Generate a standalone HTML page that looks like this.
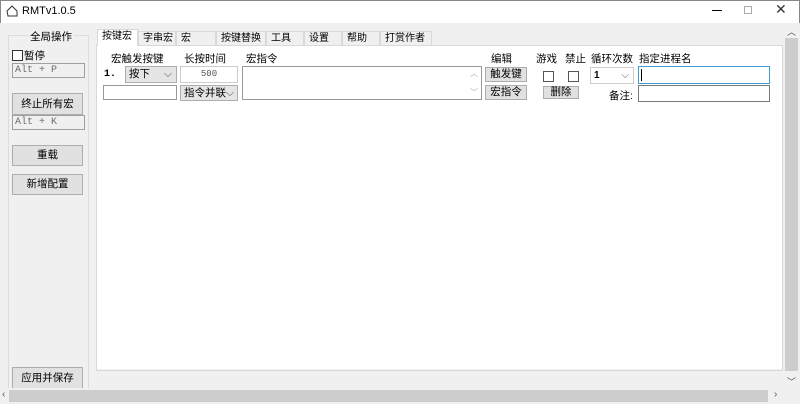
<html><head><style>
*{margin:0;padding:0;box-sizing:border-box}
body{width:800px;height:404px;background:#f0f0f0;font-family:"Liberation Sans","Noto Sans CJK SC",sans-serif;font-size:10.5px;color:#000;position:relative;overflow:hidden}
.a{position:absolute}
.btn{position:absolute;background:#e1e1e1;border:1px solid #adadad;text-align:center;font-size:10.5px}
.inp{position:absolute;background:#fff;border:1px solid #7a7a7a}
.ro{position:absolute;background:#f0f0f0;border:1px solid #a0a0a0;font-family:"Liberation Mono",monospace;font-size:10px;color:#6d6d6d;padding-left:2px;line-height:13px}
.cb{position:absolute;width:11px;height:11px;border:1px solid #333;background:#fff}
.tab{position:absolute;top:31px;height:14px;border:1px solid #d9d9d9;border-bottom:none;background:#f0f0f0;font-size:10px;line-height:13px;padding-left:4px}
.sel{position:absolute;background:#e5e5e5;border:1px solid #adadad;font-size:10.5px;line-height:14px;padding-left:3px}
</style></head><body>
<div class="a" style="left:0;top:0;width:800px;height:23px;background:#fff;border:1px solid #888;border-bottom:none"></div>
<svg class="a" style="left:5px;top:4px" width="14" height="14"><path d="M2 7 L7 2 L12 7 L12 12 L3 12 Z" fill="none" stroke="#333"/></svg>
<div class="a" style="left:22px;top:5px;font-size:11px">RMTv1.0.5</div>
<div class="a" style="left:712px;top:10px;width:10px;height:1px;background:#000"></div>
<div class="a" style="left:744px;top:6px;width:8px;height:8px;border:1px solid #aaa"></div>
<div class="a" style="left:775px;top:1px;font-size:14px;color:#333">✕</div>

<div class="a" style="left:8px;top:35px;width:81px;height:358px;border:1px solid #dcdcdc"></div>
<div class="a" style="left:28px;top:29px;background:#f0f0f0;padding:0 2px">全局操作</div>
<div class="cb" style="left:12px;top:50px"></div><div class="a" style="left:24px;top:48px">暂停</div>
<div class="ro" style="left:12px;top:63px;width:73px;height:15px">Alt + P</div>
<div class="btn" style="left:12px;top:93px;width:71px;height:22px;line-height:20px">终止所有宏</div>
<div class="ro" style="left:12px;top:115px;width:73px;height:15px">Alt + K</div>
<div class="btn" style="left:12px;top:145px;width:71px;height:21px;line-height:19px">重载</div>
<div class="btn" style="left:12px;top:174px;width:71px;height:21px;line-height:19px">新增配置</div>
<div class="btn" style="left:12px;top:367px;width:71px;height:22px;line-height:20px">应用并保存</div>

<div class="a" style="left:96px;top:45px;width:687px;height:326px;border:1px solid #d9d9d9;background:#f0f0f0"></div>
<div class="a" style="left:97px;top:46px;width:685px;height:323px;background:#fff"></div>
<div class="tab" style="left:97px;top:29px;height:17px;background:#fff;width:41px">按键宏</div>
<div class="tab" style="left:138px;width:38px">字串宏</div>
<div class="tab" style="left:176px;width:40px">宏</div>
<div class="tab" style="left:216px;width:50px">按键替换</div>
<div class="tab" style="left:266px;width:38px">工具</div>
<div class="tab" style="left:304px;width:38px">设置</div>
<div class="tab" style="left:342px;width:38px">帮助</div>
<div class="tab" style="left:380px;width:52px">打赏作者</div>

<div class="a" style="left:111px;top:51px">宏触发按键</div>
<div class="a" style="left:184px;top:51px">长按时间</div>
<div class="a" style="left:246px;top:51px">宏指令</div>
<div class="a" style="left:491px;top:51px">编辑</div>
<div class="a" style="left:536px;top:51px">游戏</div>
<div class="a" style="left:565px;top:51px">禁止</div>
<div class="a" style="left:591px;top:51px">循环次数</div>
<div class="a" style="left:639px;top:51px">指定进程名</div>

<div class="a" style="left:104px;top:69px;font-family:'Liberation Mono',monospace;font-weight:bold;font-size:10px">1.</div>
<div class="sel" style="left:125px;top:66px;width:52px;height:17px">按下<span style="position:absolute;right:4px;color:#555">⌵</span></div>
<div class="inp" style="left:103px;top:85px;width:74px;height:15px;border-color:#999"></div>
<div class="inp" style="left:180px;top:66px;width:58px;height:17px;border-color:#ccc;text-align:center;font-size:9px;color:#555;line-height:15px;font-family:'Liberation Mono',monospace">500</div>
<div class="sel" style="left:180px;top:85px;width:58px;height:16px">指令并联<span style="position:absolute;right:3px;color:#555">⌵</span></div>
<div class="inp" style="left:242px;top:66px;width:240px;height:34px;border-color:#999"></div>
<div class="a" style="left:470px;top:68px;color:#aaa;font-size:8px">︿</div>
<div class="a" style="left:470px;top:87px;color:#aaa;font-size:8px">﹀</div>
<div class="btn" style="left:485px;top:67px;width:42px;height:15px;line-height:13px">触发键</div>
<div class="btn" style="left:485px;top:85px;width:42px;height:15px;line-height:13px">宏指令</div>
<div class="cb" style="left:543px;top:71px;border-color:#555"></div>
<div class="cb" style="left:568px;top:71px;border-color:#555"></div>
<div class="btn" style="left:543px;top:86px;width:36px;height:13px;line-height:11px">删除</div>
<div class="inp" style="left:590px;top:67px;width:44px;height:17px;border-color:#ccc;font-size:10px;font-weight:bold;padding-left:3px;line-height:15px">1<span style="position:absolute;right:4px;color:#555;font-weight:normal">⌵</span></div>
<div class="inp" style="left:638px;top:66px;width:132px;height:18px;border-color:#3c9fd0"></div>
<div class="a" style="left:641px;top:69px;width:1px;height:12px;background:#000"></div>
<div class="a" style="left:609px;top:88px">备注:</div>
<div class="inp" style="left:638px;top:85px;width:132px;height:17px"></div>

<div class="a" style="left:783px;top:23px;width:17px;height:365px;background:#f0f0f0"></div>
<div class="a" style="left:785px;top:38px;width:13px;height:333px;background:#cdcdcd"></div>
<div class="a" style="left:787px;top:25px;font-size:9px;color:#555">︿</div>
<div class="a" style="left:787px;top:375px;font-size:9px;color:#555">﹀</div>
<div class="a" style="left:0;top:388px;width:783px;height:16px;background:#f0f0f0"></div>
<div class="a" style="left:9px;top:390px;width:759px;height:12px;background:#cdcdcd"></div>
<div class="a" style="left:2px;top:389px;font-size:10px;color:#555">‹</div>
<div class="a" style="left:774px;top:389px;font-size:10px;color:#555">›</div>
</body></html>
